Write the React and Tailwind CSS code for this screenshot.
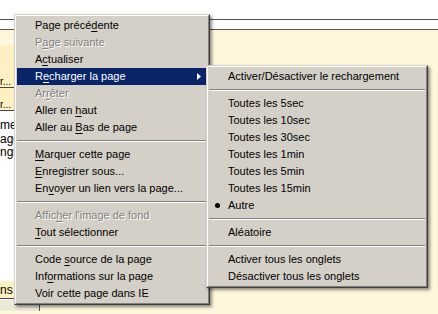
import React from "react";

const mainItems = [
    { label: "Page précé", key: "d", rest: "ente" },
    { label: "P", key: "a", rest: "ge suivante", disabled: true },
    { label: "A", key: "c", rest: "tualiser" },
    { label: "R", key: "e", rest: "charger la page", active: true, submenu: true },
    { label: "Ar", key: "r", rest: "êter", disabled: true },
    { label: "Aller en ", key: "h", rest: "aut" },
    { label: "Aller au ", key: "B", rest: "as de page" },
    { separator: true },
    { label: "", key: "M", rest: "arquer cette page" },
    { label: "", key: "E", rest: "nregistrer sous..." },
    { label: "En", key: "v", rest: "oyer un lien vers la page..." },
    { separator: true },
    { label: "Affic", key: "h", rest: "er l'image de fond", disabled: true },
    { label: "", key: "T", rest: "out sélectionner" },
    { separator: true },
    { label: "Code ", key: "s", rest: "ource de la page" },
    { label: "Inf", key: "o", rest: "rmations sur la page" },
    { label: "Voir cette page dans IE", key: "", rest: "" },
];

const subItems = [
    { label: "Activer/Désactiver le rechargement" },
    { separator: true },
    { label: "Toutes les 5sec" },
    { label: "Toutes les 10sec" },
    { label: "Toutes les 30sec" },
    { label: "Toutes les 1min" },
    { label: "Toutes les 5min" },
    { label: "Toutes les 15min" },
    { label: "Autre", checked: true },
    { separator: true },
    { label: "Aléatoire" },
    { separator: true },
    { label: "Activer tous les onglets" },
    { label: "Désactiver tous les onglets" },
];

const Separator = () => (
    <div className="h-[10px] flex flex-col justify-center">
        <div className="h-px bg-[#808080]" />
        <div className="h-px bg-white" />
    </div>
);

const MenuFrame = ({ className, children }) => (
    <div
        className={`absolute border border-t-[#d4d0c8] border-l-[#d4d0c8] border-r-[#404040] border-b-[#404040] bg-[#d4d0c8] shadow-[2px_2px_3px_rgba(0,0,0,0.45)] ${className}`}
    >
        <div className="border border-t-white border-l-white border-r-[#808080] border-b-[#808080] p-px">
            {children}
        </div>
    </div>
);

const MenuItem = ({ item }) => {
    const color = item.active
        ? "bg-[#0a246a] text-white"
        : item.disabled
          ? "text-[#808080] [text-shadow:1px_1px_0_#fff]"
          : "text-black";
    return (
        <div className={`relative h-[17px] flex items-center pl-[18px] whitespace-nowrap ${color}`}>
            <span>
                {item.label}
                {item.key && <span className="underline underline-offset-[2px]">{item.key}</span>}
                {item.rest}
            </span>
            {item.submenu && (
                <svg className="absolute left-[180px] top-[5px]" width="4" height="7" viewBox="0 0 4 7">
                    <path d="M0 0 L4 3.5 L0 7 Z" fill="#fff" />
                </svg>
            )}
        </div>
    );
};

const SubItem = ({ item }) => (
    <div className="relative h-[17px] flex items-center pl-[19px] whitespace-nowrap text-black">
        {item.checked && (
            <span className="absolute left-[6px] top-[6px] w-[5px] h-[5px] rounded-full bg-black" />
        )}
        <span>{item.label}</span>
    </div>
);

const App = () => {
    return (
        <div className="relative w-[438px] h-[314px] overflow-hidden bg-[#fff7dc] font-['Liberation_Sans',Arial,sans-serif] text-[11px] leading-none">
            {/* Page behind */}
            <div className="h-[19px] bg-white" />
            <div className="h-px bg-[#555]" />
            <div className="h-[9px] bg-white" />
            <div className="h-px bg-[#555]" />

            <div className="flex">
                <div className="w-[40px] flex flex-col text-black text-[12px]">
                    <div className="h-[15px] bg-[#fff7dc]" />
                    <div className="h-[33px] bg-[#fdf0c2]" />
                    <div className="h-[10px] bg-[#fdf0c2] border-b border-[#444] flex items-end">
                        <span className="text-[10px] leading-[10px]">r...</span>
                    </div>
                    <div className="h-[12px] bg-[#fdf0c2]" />
                    <div className="h-[11px] bg-[#fdf0c2] border-b border-[#444] flex items-end">
                        <span className="text-[10px] leading-[10px]">r...</span>
                    </div>
                    <div className="h-[170px] bg-white pt-[8px] flex flex-col">
                        <span className="leading-[13.5px]">me</span>
                        <span className="leading-[13.5px]">age</span>
                        <span className="leading-[13.5px]">ngl</span>
                    </div>
                    <div className="h-[18px] bg-[#fdf0c2] border-b border-[#444] flex items-center">
                        <span>ns</span>
                    </div>
                    <div className="h-[12px] flex">
                        <div className="w-[53px] bg-[#ece9d8] border-t border-white border-r border-r-[#555]" />
                    </div>
                </div>
            </div>

            {/* Context menu */}
            <MenuFrame className="left-[14px] top-[14px] w-[196px]">
                {mainItems.map((item, i) =>
                    item.separator ? <Separator key={i} /> : <MenuItem key={i} item={item} />
                )}
            </MenuFrame>

            {/* Submenu */}
            <MenuFrame className="left-[206px] top-[65px] w-[222px]">
                {subItems.map((item, i) =>
                    item.separator ? <Separator key={i} /> : <SubItem key={i} item={item} />
                )}
            </MenuFrame>
        </div>
    );
};

export default App;
